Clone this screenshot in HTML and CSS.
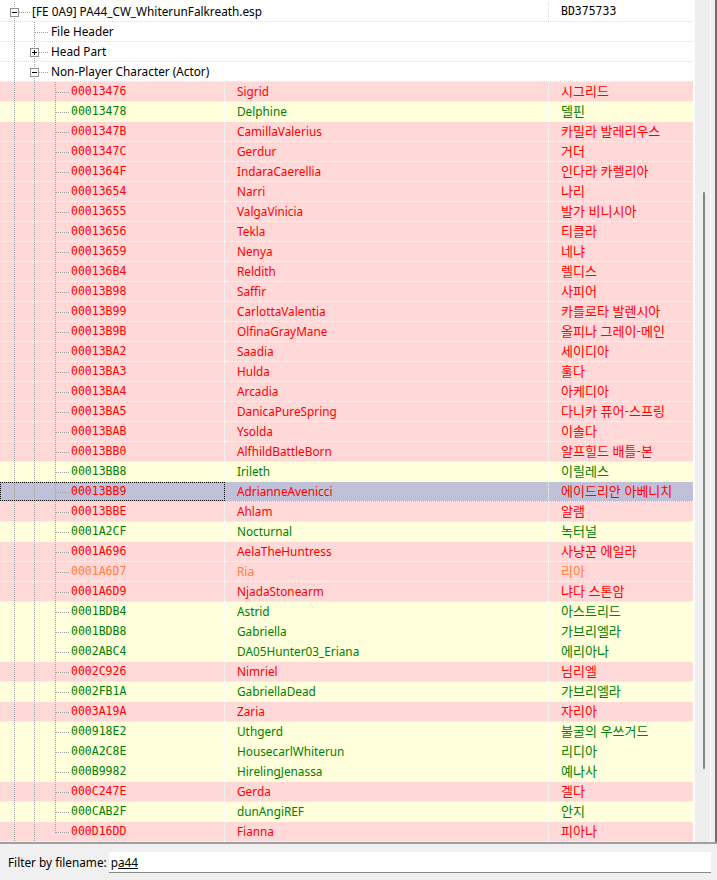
FILE: index.html
```html
<!DOCTYPE html>
<html lang="ko">
<head>
<meta charset="utf-8">
<link rel="stylesheet" href="styles.css">
</head>
<body>
<div class="app">
  <div class="tree">
    <div class="list">
      <div class="row head r0">
        <div class="c1 t-root"><span class="box minus"></span><span class="lbl root-lbl">[FE 0A9] PA44_CW_WhiterunFalkreath.esp</span></div>
        <div class="c2"></div>
        <div class="c3 mono dark">BD375733</div>
      </div>
      <div class="row head">
        <div class="c1 t-l1"><span class="lbl l1-lbl">File Header</span></div>
        <div class="c2"></div><div class="c3"></div>
      </div>
      <div class="row head">
        <div class="c1 t-l1b"><span class="box plus"></span><span class="lbl l1b-lbl">Head Part</span></div>
        <div class="c2"></div><div class="c3"></div>
      </div>
      <div class="row head">
        <div class="c1 t-l1b"><span class="box minus"></span><span class="lbl l1b-lbl">Non-Player Character (Actor)</span></div>
        <div class="c2"></div><div class="c3"></div>
      </div>

      <div class="row pink"><div class="c1 t-l2"><span class="id">00013476</span></div><div class="c2">Sigrid</div><div class="c3">시그리드</div></div>
      <div class="row yel"><div class="c1 t-l2"><span class="id">00013478</span></div><div class="c2">Delphine</div><div class="c3">델핀</div></div>
      <div class="row pink"><div class="c1 t-l2"><span class="id">0001347B</span></div><div class="c2">CamillaValerius</div><div class="c3">카밀라 발레리우스</div></div>
      <div class="row pink"><div class="c1 t-l2"><span class="id">0001347C</span></div><div class="c2">Gerdur</div><div class="c3">거더</div></div>
      <div class="row pink"><div class="c1 t-l2"><span class="id">0001364F</span></div><div class="c2">IndaraCaerellia</div><div class="c3">인다라 카렐리아</div></div>
      <div class="row pink"><div class="c1 t-l2"><span class="id">00013654</span></div><div class="c2">Narri</div><div class="c3">나리</div></div>
      <div class="row pink"><div class="c1 t-l2"><span class="id">00013655</span></div><div class="c2">ValgaVinicia</div><div class="c3">발가 비니시아</div></div>
      <div class="row pink"><div class="c1 t-l2"><span class="id">00013656</span></div><div class="c2">Tekla</div><div class="c3">티클라</div></div>
      <div class="row pink"><div class="c1 t-l2"><span class="id">00013659</span></div><div class="c2">Nenya</div><div class="c3">네냐</div></div>
      <div class="row pink"><div class="c1 t-l2"><span class="id">000136B4</span></div><div class="c2">Reldith</div><div class="c3">렐디스</div></div>
      <div class="row pink"><div class="c1 t-l2"><span class="id">00013B98</span></div><div class="c2">Saffir</div><div class="c3">사피어</div></div>
      <div class="row pink"><div class="c1 t-l2"><span class="id">00013B99</span></div><div class="c2">CarlottaValentia</div><div class="c3">카를로타 발렌시아</div></div>
      <div class="row pink"><div class="c1 t-l2"><span class="id">00013B9B</span></div><div class="c2">OlfinaGrayMane</div><div class="c3">올피나 그레이-메인</div></div>
      <div class="row pink"><div class="c1 t-l2"><span class="id">00013BA2</span></div><div class="c2">Saadia</div><div class="c3">세이디아</div></div>
      <div class="row pink"><div class="c1 t-l2"><span class="id">00013BA3</span></div><div class="c2">Hulda</div><div class="c3">훌다</div></div>
      <div class="row pink"><div class="c1 t-l2"><span class="id">00013BA4</span></div><div class="c2">Arcadia</div><div class="c3">아케디아</div></div>
      <div class="row pink"><div class="c1 t-l2"><span class="id">00013BA5</span></div><div class="c2">DanicaPureSpring</div><div class="c3">다니카 퓨어-스프링</div></div>
      <div class="row pink"><div class="c1 t-l2"><span class="id">00013BAB</span></div><div class="c2">Ysolda</div><div class="c3">이솔다</div></div>
      <div class="row pink"><div class="c1 t-l2"><span class="id">00013BB0</span></div><div class="c2">AlfhildBattleBorn</div><div class="c3">알프힐드 배틀-본</div></div>
      <div class="row yel"><div class="c1 t-l2"><span class="id">00013BB8</span></div><div class="c2">Irileth</div><div class="c3">이릴레스</div></div>
      <div class="row sel"><div class="c1 t-l2"><span class="id">00013BB9</span></div><div class="c2">AdrianneAvenicci</div><div class="c3">에이드리안 아베니치</div></div>
      <div class="row pink"><div class="c1 t-l2"><span class="id">00013BBE</span></div><div class="c2">Ahlam</div><div class="c3">알램</div></div>
      <div class="row yel"><div class="c1 t-l2"><span class="id">0001A2CF</span></div><div class="c2">Nocturnal</div><div class="c3">녹터널</div></div>
      <div class="row pink"><div class="c1 t-l2"><span class="id">0001A696</span></div><div class="c2">AelaTheHuntress</div><div class="c3">사냥꾼 에일라</div></div>
      <div class="row ria"><div class="c1 t-l2"><span class="id">0001A6D7</span></div><div class="c2">Ria</div><div class="c3">리아</div></div>
      <div class="row pink"><div class="c1 t-l2"><span class="id">0001A6D9</span></div><div class="c2">NjadaStonearm</div><div class="c3">냐다 스톤암</div></div>
      <div class="row yel"><div class="c1 t-l2"><span class="id">0001BDB4</span></div><div class="c2">Astrid</div><div class="c3">아스트리드</div></div>
      <div class="row yel"><div class="c1 t-l2"><span class="id">0001BDB8</span></div><div class="c2">Gabriella</div><div class="c3">가브리엘라</div></div>
      <div class="row yel"><div class="c1 t-l2"><span class="id">0002ABC4</span></div><div class="c2">DA05Hunter03_Eriana</div><div class="c3">에리아나</div></div>
      <div class="row pink"><div class="c1 t-l2"><span class="id">0002C926</span></div><div class="c2">Nimriel</div><div class="c3">님리엘</div></div>
      <div class="row yel"><div class="c1 t-l2"><span class="id">0002FB1A</span></div><div class="c2">GabriellaDead</div><div class="c3">가브리엘라</div></div>
      <div class="row pink"><div class="c1 t-l2"><span class="id">0003A19A</span></div><div class="c2">Zaria</div><div class="c3">자리아</div></div>
      <div class="row yel"><div class="c1 t-l2"><span class="id">000918E2</span></div><div class="c2">Uthgerd</div><div class="c3">불굴의 우쓰거드</div></div>
      <div class="row yel"><div class="c1 t-l2"><span class="id">000A2C8E</span></div><div class="c2">HousecarlWhiterun</div><div class="c3">리디아</div></div>
      <div class="row yel"><div class="c1 t-l2"><span class="id">000B9982</span></div><div class="c2">HirelingJenassa</div><div class="c3">예나사</div></div>
      <div class="row pink"><div class="c1 t-l2"><span class="id">000C247E</span></div><div class="c2">Gerda</div><div class="c3">겔다</div></div>
      <div class="row yel"><div class="c1 t-l2"><span class="id">000CAB2F</span></div><div class="c2">dunAngiREF</div><div class="c3">안지</div></div>
      <div class="row pink"><div class="c1 t-l2 last"><span class="id">000D16DD</span></div><div class="c2">Fianna</div><div class="c3">피아나</div></div>
    </div>
    <div class="vscroll"><div class="thumb"></div></div>
    <div class="edge"></div>
  </div>
  <div class="filter">
    <label class="flabel" for="f">Filter by filename:</label>
    <div class="finput" id="f">p<span class="ul">a44</span></div>
  </div>
</div>
</body>
</html>
```

FILE: styles.css
```css
html, body {
  margin: 0;
  padding: 0;
}
body {
  background: #f0f0f0;
  font-family: "Noto Sans", "Noto Sans CJK KR", sans-serif;
  font-size: 11.8px;
  color: #000;
}
.app {
  width: 717px;
  height: 880px;
  display: flex;
  flex-direction: column;
  overflow: hidden;
}
.tree {
  height: 842px;
  display: flex;
  border-bottom: 2px solid #a0a0a0;
}
.list {
  width: 694px;
  background: #fff;
  padding-top: 2px;
  box-sizing: border-box;
  overflow: hidden;
}
.row {
  width: 693px;
  height: 20px;
  box-sizing: border-box;
  display: flex;
  border-bottom: 1px dotted #dcdcdc;
}
.c1, .c2, .c3 {
  box-sizing: border-box;
  display: flex;
  align-items: center;
  white-space: nowrap;
}
.c1 { width: 225px; flex: none; overflow: visible; }
.c1 .lbl, .c1 .id, .c2 { padding-bottom: 2px; }
.c2 { width: 324px; flex: none; padding-left: 12px; }
.c3 {
  flex: 1;
  padding-left: 12px;
  padding-bottom: 2px;
  font-family: "Noto Sans CJK KR", "Noto Sans", sans-serif;
  font-size: 13px;
}

.r0 .c2 { border-right: 1px dotted #dcdcdc; }

.pink, .yel, .ria, .sel { border-bottom-color: #fbfbfb; }
.pink .c1, .yel .c1, .ria .c1 { border-right: 1px dotted #fbfbfb; }
.pink .c2, .yel .c2, .ria .c2, .sel .c2 { border-right: 1px dotted #fbfbfb; }

.pink { background: #ffd8d8; color: #ff0000; }
.ria { background: #ffd8d8; color: #ff8040; }
.yel { background: #ffffdc; color: #008000; }
.sel { background: #c0c0d8; color: #ff0000; }
.sel .c1 { outline: 1px dotted #000; outline-offset: -1px; }

.mono, .id {
  font-family: "DejaVu Sans Mono", "Liberation Mono", monospace;
  font-size: 11.5px;
}
.dark { color: #000; }

/* tree guide lines */
.t-root {
  background:
    repeating-linear-gradient(to bottom, #a0a0a0 0 1px, transparent 1px 2px) 14px 0 / 1px 100% no-repeat,
    repeating-linear-gradient(to right, #a0a0a0 0 1px, transparent 1px 2px) 19px 10px / 12px 1px no-repeat;
}
.t-l1 {
  background:
    repeating-linear-gradient(to bottom, #a0a0a0 0 1px, transparent 1px 2px) 14px 0 / 1px 100% no-repeat,
    repeating-linear-gradient(to bottom, #a0a0a0 0 1px, transparent 1px 2px) 34px 0 / 1px 100% no-repeat,
    repeating-linear-gradient(to right, #a0a0a0 0 1px, transparent 1px 2px) 35px 10px / 14px 1px no-repeat;
}
.t-l1b {
  background:
    repeating-linear-gradient(to bottom, #a0a0a0 0 1px, transparent 1px 2px) 14px 0 / 1px 100% no-repeat,
    repeating-linear-gradient(to bottom, #a0a0a0 0 1px, transparent 1px 2px) 34px 0 / 1px 100% no-repeat,
    repeating-linear-gradient(to right, #a0a0a0 0 1px, transparent 1px 2px) 39px 10px / 10px 1px no-repeat;
}
.t-l2 {
  background:
    repeating-linear-gradient(to bottom, #a0a0a0 0 1px, transparent 1px 2px) 14px 0 / 1px 100% no-repeat,
    repeating-linear-gradient(to bottom, #a0a0a0 0 1px, transparent 1px 2px) 34px 0 / 1px 100% no-repeat,
    repeating-linear-gradient(to bottom, #a0a0a0 0 1px, transparent 1px 2px) 55px 0 / 1px 100% no-repeat,
    repeating-linear-gradient(to right, #a0a0a0 0 1px, transparent 1px 2px) 56px 10px / 13px 1px no-repeat;
  padding-left: 71px;
}
.t-l2.last {
  background:
    repeating-linear-gradient(to bottom, #a0a0a0 0 1px, transparent 1px 2px) 14px 0 / 1px 100% no-repeat,
    repeating-linear-gradient(to bottom, #a0a0a0 0 1px, transparent 1px 2px) 34px 0 / 1px 100% no-repeat,
    repeating-linear-gradient(to bottom, #a0a0a0 0 1px, transparent 1px 2px) 55px 0 / 1px 11px no-repeat,
    repeating-linear-gradient(to right, #a0a0a0 0 1px, transparent 1px 2px) 56px 10px / 13px 1px no-repeat;
}

.box {
  width: 9px;
  height: 9px;
  box-sizing: border-box;
  border: 1px solid #909090;
  background-color: #fff;
  flex: none;
  align-self: flex-start;
  margin-top: 6px;
}
.minus {
  background: linear-gradient(#000, #000) center / 5px 1px no-repeat, #fff;
}
.plus {
  background:
    linear-gradient(#000, #000) center / 5px 1px no-repeat,
    linear-gradient(#000, #000) center / 1px 5px no-repeat, #fff;
}
.t-root .box { margin-left: 10px; }
.root-lbl { margin-left: 13px; }
.l1-lbl { margin-left: 51px; }
.t-l1b .box { margin-left: 30px; }
.l1b-lbl { margin-left: 12px; }

/* scrollbar */
.vscroll {
  width: 16px;
  flex: none;
  background: #eeeeee;
  border-left: 1px solid #fdfdfd;
  display: flex;
  justify-content: center;
  padding-top: 192px;
  box-sizing: border-box;
}
.thumb {
  width: 2px;
  height: 577px;
  background: #858585;
  border-radius: 1px;
  margin-left: 2px;
}
.edge {
  flex: 1;
  background: #f0f0f0;
  border-left: 1px solid #fafafa;
  border-right: 2px solid #6e6e6e;
}

/* filter bar */
.filter {
  flex: 1;
  display: flex;
  align-items: center;
  padding: 0 6px 0 8px;
  gap: 2px;
}
.flabel {
  font-family: "Noto Sans", sans-serif;
  font-size: 11.8px;
}
.finput {
  flex: 1;
  height: 21px;
  background: #fff;
  border-bottom: 1px solid #8a8a8a;
  box-sizing: border-box;
  padding-left: 2px;
  display: flex;
  align-items: center;
  font-size: 11.8px;
}
.ul {
  text-decoration: underline;
  text-underline-offset: 1px;
}
```
